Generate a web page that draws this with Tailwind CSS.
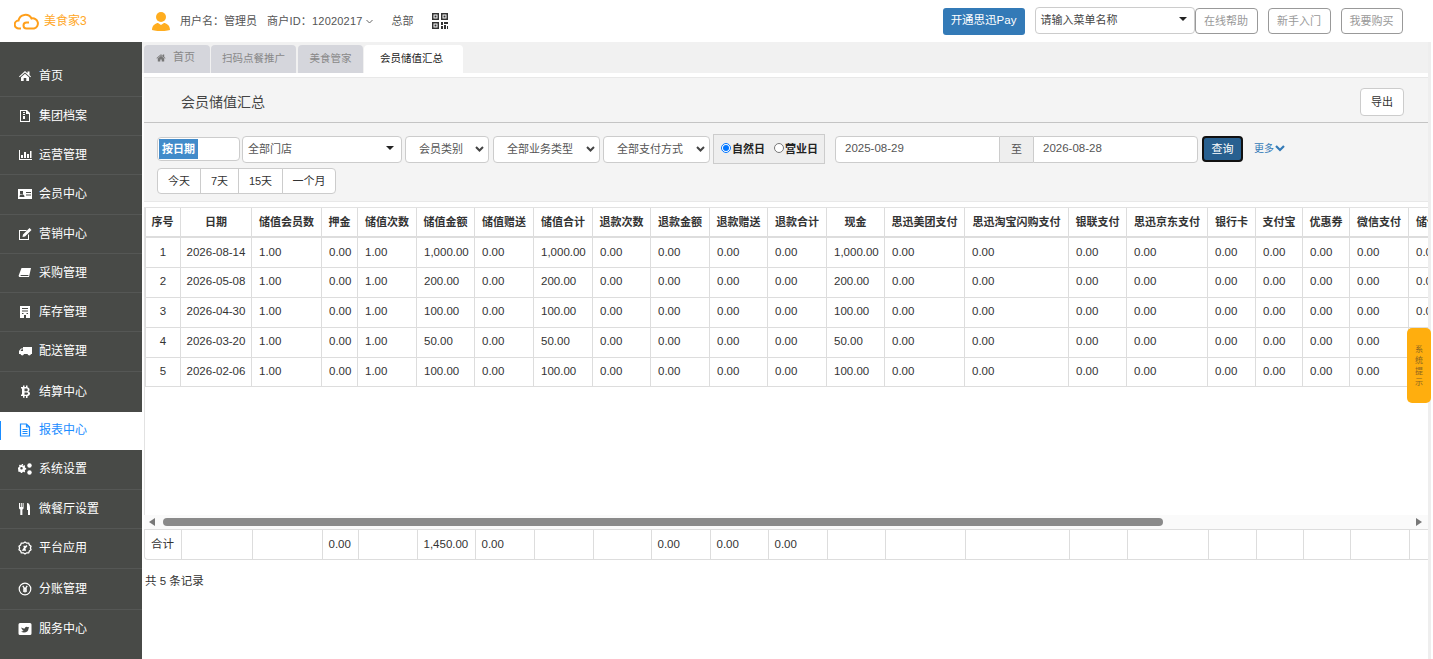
<!DOCTYPE html>
<html lang="zh-CN">

<head>
  <meta charset="UTF-8">
  <meta name="viewport" content="width=device-width, initial-scale=1.0">
  <title>会员储值汇总</title>
  <script src="https://cdn.jsdelivr.net/npm/@tailwindcss/browser@4"></script>
</head>

<body class="bg-white text-[#333] text-xs font-['Liberation_Sans','Noto_Sans_CJK_SC',sans-serif]">
  <div class="relative w-[1433px] h-[659px] overflow-hidden flex flex-col">

    <!-- Header -->
    <header class="h-[42px] shrink-0 flex items-center bg-white">
      <div class="w-[142px] pl-[14px] flex items-center gap-[4px] text-[#ffa726] text-xs">
        <svg class="w-[26px] h-[18px]" viewBox="0 0 26 18" fill="none" stroke="#ff9f1a" stroke-width="2">
          <path d="M7 16.500H5a4 4 0 0 1-.5-8A7 7 0 0 1 17.500 6.500 5 5 0 0 1 20 16.500H12.500a3 3 0 0 1 0-6H15" />
        </svg>
        <span>美食家3</span>
      </div>
      <svg class="ml-[10px] w-[18px] h-[20px]" viewBox="0 0 18 20" fill="#ffad1f">
        <circle cx="9" cy="6" r="5" />
        <path d="M0 19c0-5 4-7 6-7l3 2 3-2c2 0 6 2 6 7-4 1.500-14 1.500-18 0z" />
      </svg>
      <span class="ml-[10px] text-[11px] text-[#555]">用户名：管理员</span>
      <span class="ml-[10px] text-[11px] text-[#555] tracking-[0.2px]">商户ID：12020217</span>
      <svg class="ml-[3px] w-[7px] h-[5px]" viewBox="0 0 7 5" fill="none" stroke="#666">
        <path d="M.5 1l3 3 3-3" />
      </svg>
      <span class="ml-[19px] text-[11px] text-[#555]">总部</span>
      <svg class="ml-[18px] w-[16px] h-[16px]" viewBox="0 0 16 16" fill="#333">
        <path fill-rule="evenodd" d="M0 0h7v7H0zM1.500 1.500v4h4v-4zM9 0h7v7H9zm1.500 1.500v4h4v-4zM0 9h7v7H0zm1.500 1.500v4h4v-4z" />
        <path d="M2.500 2.500h2v2h-2zM11.500 2.500h2v2h-2zM2.500 11.500h2v2h-2zM9 9h2v3H9zM12 9h4v2h-4zM12 12h2v4h-2zM9 13h2v3H9zM15 13h1v3h-1z" />
      </svg>
      <button class="ml-[495px] w-[82px] h-[27px] rounded-[3px] bg-[#337ab7] text-white text-[11.5px]">开通思迅Pay</button>
      <div class="ml-[10px] w-[160px] h-[27px] -mt-[1px] flex items-center justify-between px-[5px] bg-white border border-[#ccc] rounded-[4px] text-[11px] text-[#444]">
        <span>请输入菜单名称</span>
        <span class="mr-[2px] -mt-[4px] border-x-[4px] border-t-[4px] border-x-transparent border-t-[#222]"></span>
      </div>
      <button class="w-[63px] h-[26px] border border-[#999] rounded-[4px] text-[11px] text-[#999]">在线帮助</button>
      <button class="ml-[10px] w-[63px] h-[26px] border border-[#999] rounded-[4px] text-[11px] text-[#999]">新手入门</button>
      <button class="ml-[10px] w-[62px] h-[26px] border border-[#999] rounded-[4px] text-[11px] text-[#999]">我要购买</button>
    </header>

    <div class="flex flex-1 min-h-0">
      <!-- Sidebar -->
      <aside id="sideMenu" class="w-[142px] shrink-0 pt-[15px] bg-[#484a47] text-white"></aside>

      <!-- Main -->
      <main class="relative flex-1 min-w-0 pl-[2px] border-r-[3px] border-r-[#eeeeee] mr-[2px]">
        <div class="-ml-[2px] pl-[2px] h-[31px] flex items-end gap-[1px] bg-[#f1f1f1] text-[10.5px]">
          <div class="w-[66px] h-[28px] flex items-center pl-[12px] pb-[3px] gap-[7px] rounded-t-[4px] bg-[#d5d6dc] text-[#888] text-[11px]">
            <svg class="w-[10px] h-[10px]" viewBox="0 0 1792 1792" fill="#777">
              <path d="M1472 992v480q0 26-19 45t-45 19h-384v-384h-256v384h-384q-26 0-45-19t-19-45v-480q0-1 .5-3t.5-3l575-474 575 474q1 2 1 6zm223-69l-62 74q-8 9-21 11h-3q-13 0-21-7l-692-577-692 577q-12 8-24 7-13-2-21-11l-62-74q-8-10-7-23.5t11-21.5l719-599q32-26 76-26t76 26l244 204v-195q0-14 9-23t23-9h192q14 0 23 9t9 23v408l219 182q10 8 11 21.5t-7 23.5z" />
            </svg>
            <span>首页</span>
          </div>
          <div class="w-[85px] h-[28px] flex items-center justify-center pb-[3px] rounded-t-[4px] bg-[#d5d6dc] text-[#888]">扫码点餐推广</div>
          <div class="ml-[1px] w-[65px] h-[28px] flex items-center justify-center pb-[3px] rounded-t-[4px] bg-[#d5d6dc] text-[#888]">美食管家</div>
          <div class="w-[99px] h-[28px] flex items-center justify-center pb-[3px] pr-[4px] rounded-t-[4px] bg-white text-[#222]">会员储值汇总</div>
        </div>

        <!-- Filter panel -->
        <section class="mt-[4px] h-[125px] bg-[#f4f4f4] border-y border-[#e8e8e8]">
          <div class="h-[45px] pt-[4px] flex items-center justify-between pl-[37px] pr-[24px] border-b border-[#c4c4c4]">
            <h2 class="text-sm text-[#444]">会员储值汇总</h2>
            <button class="w-[44px] h-[28px] bg-white border border-[#ccc] rounded-[4px] text-[11px] text-[#333]">导出</button>
          </div>
          <div class="pl-[13px] pt-[11px]">
            <div class="flex items-center h-[30px] text-[11px] text-[#555]">
              <div class="w-[83px] h-[24px] p-[1px] bg-white border border-[#ccc] rounded-[4px]">
                <div class="w-[39px] h-full flex items-center justify-center bg-[#428bca] text-white text-[11px] font-bold">按日期</div>
              </div>
              <div class="ml-[2px] w-[160px] h-[27px] flex items-center justify-between pl-[5px] pr-[5px] bg-white border border-[#ccc] rounded-[4px]">
                <span>全部门店</span>
                <span class="mr-[2px] -mt-[3px] border-x-[4px] border-t-[4px] border-x-transparent border-t-[#222]"></span>
              </div>
              <div class="ml-[3px] w-[84px] h-[27px] flex items-center justify-between pl-[13px] pr-[4px] bg-white border border-[#ccc] rounded-[4px]">
                <span>会员类别</span>
                <svg class="w-[9px] h-[6px]" viewBox="0 0 9 6" fill="none" stroke="#444" stroke-width="2"><path d="M1 1l3.500 3.500L8 1" /></svg>
              </div>
              <div class="ml-[4px] w-[107px] h-[27px] flex items-center justify-between pl-[13px] pr-[4px] bg-white border border-[#ccc] rounded-[4px]">
                <span>全部业务类型</span>
                <svg class="w-[9px] h-[6px]" viewBox="0 0 9 6" fill="none" stroke="#444" stroke-width="2"><path d="M1 1l3.500 3.500L8 1" /></svg>
              </div>
              <div class="ml-[3px] w-[107px] h-[27px] flex items-center justify-between pl-[13px] pr-[4px] bg-white border border-[#ccc] rounded-[4px]">
                <span>全部支付方式</span>
                <svg class="w-[9px] h-[6px]" viewBox="0 0 9 6" fill="none" stroke="#444" stroke-width="2"><path d="M1 1l3.500 3.500L8 1" /></svg>
              </div>
              <div class="ml-[3px] w-[112px] h-[30px] flex items-center pl-[7px] bg-[#eeeeee] border border-[#ccc] text-[#222] font-bold text-[11px]">
                <input type="radio" name="dayType" checked class="w-[10px] h-[10px] -mt-[2px] m-0">
                <span class="ml-[1px]">自然日</span>
                <input type="radio" name="dayType" class="ml-[9px] w-[10px] h-[10px] -mt-[2px] m-0">
                <span class="ml-[1px]">营业日</span>
              </div>
              <div class="ml-[10px] w-[165px] h-[27px] flex items-center pl-[9px] bg-white border border-[#ccc] rounded-l-[4px] text-[11.500px] text-[#555]">2025-08-29</div>
              <div class="w-[33px] h-[27px] flex items-center justify-center bg-[#eeeeee] border-y border-[#ccc]">至</div>
              <div class="w-[165px] h-[27px] flex items-center pl-[9px] bg-white border border-[#ccc] rounded-r-[4px] text-[11.500px] text-[#555]">2026-08-28</div>
              <button class="ml-[4px] w-[41px] h-[26px] bg-[#286090] border-2 border-[#111] rounded-[4px] text-white text-[11px]">查询</button>
              <span class="ml-[11px] text-[10px] text-[#337ab7]">更多</span>
              <svg class="ml-[1px] -mt-[1px] w-[10px] h-[7px]" viewBox="0 0 10 7" fill="none" stroke="#337ab7" stroke-width="2.200"><path d="M1 1l4 4 4-4" /></svg>
            </div>
            <div class="mt-[4px] flex h-[26px] text-[11px] text-[#333]">
              <button class="w-[44px] bg-white border border-[#ccc] rounded-l-[4px]">今天</button>
              <button class="-ml-[1px] w-[39px] bg-white border border-[#ccc]">7天</button>
              <button class="-ml-[1px] w-[45px] bg-white border border-[#ccc]">15天</button>
              <button class="-ml-[1px] w-[54px] bg-white border border-[#ccc] rounded-r-[4px]">一个月</button>
            </div>
          </div>
        </section>

        <!-- Data table -->
        <div class="mt-[5px] h-[308px] overflow-hidden border-l border-t border-[#e2e2e2] text-[11.500px]">
          <table id="dataTable" class="table-fixed border-collapse w-[1322px]"></table>
        </div>

        <!-- Scrollbar -->
        <div class="h-[14px] flex items-center bg-[#fafafa]">
          <span class="ml-[5px] border-y-[4px] border-r-[6px] border-y-transparent border-r-[#777]"></span>
          <div class="ml-[8px] w-[1000px] h-[8px] rounded-full bg-[#8a8a8a]"></div>
          <span class="ml-[253px] border-y-[4px] border-l-[6px] border-y-transparent border-l-[#777]"></span>
        </div>

        <!-- Totals -->
        <div class="h-[31px] overflow-hidden border-l border-t border-b border-[#dddddd] rounded-bl-[4px] text-[11.500px]">
          <table id="totalTable" class="table-fixed border-collapse w-[1323px]"></table>
        </div>

        <p class="mt-[14px] ml-[1px] text-[11.500px] text-[#333]">共 5 条记录</p>

        <!-- System notice tab -->
        <div class="absolute right-[-3px] top-[286px] w-[24px] h-[75px] flex flex-col items-center justify-center rounded-[5px] bg-[#ffae0e] text-[8px] leading-[11px] text-[#8a6420]">
          <span>系</span><span>统</span><span>提</span><span>示</span>
        </div>
      </main>
    </div>
  </div>

  <script>
    // 侧边菜单
    const menus = [
      ['首页', 'h-[40px]', '<path d="M1 7.500L7 2l2.500 2.300V2.500h2v3.600L13 7.500l-.7.700L7 3.400 1.700 8.200zM3 8.300L7 4.800l4 3.500V12H8.300V9H5.700v3H3z"/>'],
      ['集团档案', 'h-[39px]', '<path fill-rule="evenodd" d="M2 1h7l3 3v9H2zM3 2v10h8V5H8V2zM5 3h2v1H5zM5 5h2v1H5zM5 7h2v3H5z"/>'],
      ['运营管理', 'h-[39px]', '<path d="M1 2h1v9h12v1H1zM3 7h2v3H3zM6 4h2v6H6zM9 6h2v4H9zM12 3h1.500v7H12z"/>'],
      ['会员中心', 'h-[40px]', '<path fill-rule="evenodd" d="M0 2h14v10H0zM2 4v2.500a1.500 1.500 0 0 0 3 0V4zM1.500 10h5c0-2-1-2.500-2.500-2.500S1.500 8 1.500 10zM8 5v1h5V5zM8 7.500v1h5v-1z"/>'],
      ['营销中心', 'h-[39px]', '<path d="M1 3h8L8 4H2v8h8V8l1-1v6H1zM11.500 1L13.500 3 7 9.500 4.500 10l.5-2.500z"/>'],
      ['采购管理', 'h-[39px]', '<path d="M3.500 2H13l-2 9H2c-1 0-1.500-.8-1.300-1.600zM2.500 10h7.800l.2-1H2.700z"/>'],
      ['库存管理', 'h-[39px]', '<path fill-rule="evenodd" d="M2 1h10v12H2zM4 3v1h6V3zM4 5.500v1h6v-1zM4 8v1h1.500V8zM8.500 8v1H10V8zM6 10v3h2v-3z"/>'],
      ['配送管理', 'h-[40px]', '<path fill-rule="evenodd" d="M5 3h9v7h-1a1.800 1.800 0 0 1-3.500 0H6a1.800 1.800 0 0 1-3.500 0H1V7l2-2.500h2zM2.500 7H5V5.200H3.700z"/>'],
      ['结算中心', 'h-[40px]', '<path fill-rule="evenodd" d="M3 2h2V.5h1.500V2H8V.5h1.500v1.700c1.500.4 2 1.300 2 2.300 0 .9-.5 1.600-1.200 1.900 1 .3 1.700 1.100 1.700 2.200 0 1.500-1 2.400-2.500 2.600v1.800H8V11H6.500v1.800H5V11H3V9.500h1v-6H3zM6.500 3.600v2.600h1.700c1 0 1.500-.5 1.500-1.300s-.5-1.300-1.500-1.300zM6.500 7.400v2.400h2c1 0 1.500-.5 1.500-1.200 0-.8-.5-1.200-1.500-1.200z"/>'],
      ['报表中心', 'h-[38px]', '', true],
      ['系统设置', 'h-[40px]', '<path fill-rule="evenodd" d="M4.500 3.500l1 .3.700-.7 1 1-.4.900.4.800 1 .2v1.500l-1 .2-.4.800.4.900-1 1-.7-.7-1 .3-.3 1H2.800l-.3-1-.8-.3-.7.400-1-1 .4-.9L0 7V5.500l1-.2.400-.8-.4-.9 1-1 .7.700.8-.3.300-1h1.500zM3.500 5a1.200 1.200 0 1 0 0 2.500 1.200 1.200 0 0 0 0-2.500z"/><circle cx="11.500" cy="3.500" r="2.200"/><circle cx="11.500" cy="10.500" r="2.200"/>'],
      ['微餐厅设置', 'h-[39px]', '<path d="M1 1h1v4h.8V1h1v4h.8V1h1v5c0 .8-.6 1.200-1.200 1.400V13H2.300V7.400C1.600 7.200 1 6.800 1 6zM9 1c2 0 3 2 3 4.500V13h-2V8H9z"/>'],
      ['平台应用', 'h-[40px]', '<path fill="none" stroke="#fff" stroke-width="1.300" d="M7 1l1.700 1.200 2-.1.700 1.900 1.600 1.300L12.400 7l.6 1.700-1.600 1.300-.7 1.900-2-.1L7 13l-1.700-1.200-2 .1-.7-1.900L1 8.700 1.600 7 1 5.300 2.600 4l.7-1.900 2 .1zM5 9.500l4-5M5.500 5.500h2L5 9h3"/>'],
      ['分账管理', 'h-[41px]', '<circle cx="7" cy="7" r="5.800" fill="none" stroke="#fff" stroke-width="1.200"/><path fill="none" stroke="#fff" stroke-width="1.300" d="M4.800 3.800L7 7l2.200-3.200M7 7v3.500M5 7.200h4M5 9h4"/>'],
      ['服务中心', 'h-[39px]', '<path fill-rule="evenodd" d="M2 1h10a1.500 1.500 0 0 1 1.500 1.500v9A1.500 1.500 0 0 1 12 13H2a1.500 1.500 0 0 1-1.500-1.500v-9A1.500 1.500 0 0 1 2 1zm1 4c1.300 1 2.300 1.500 3.800 1.600C6.700 5 8.800 4 10 5.200l1.200-.4-.7 1 .8-.2-.8.800C10.500 9 8.500 10.500 6 10.500c-1 0-2-.3-3-1 1 .1 2-.2 2.700-.8C4.800 8.600 4.200 8.200 4 7.500h.8C4 7.200 3.300 6.500 3.300 5.800l.8.200C3.300 5.500 3 5 3 5z"/>']
    ];

    const sideMenu = document.getElementById('sideMenu');
    sideMenu.innerHTML = menus.map(([name, height, icon, active], i) => {
      if (active) {
        return `<div class="${height} relative flex items-center pl-[18px] pb-[2px] bg-white text-[#1a8cff]">
            <span class="absolute left-0 top-[9px] h-[19px] w-[1px] bg-[#1a8cff]"></span>
            <svg class="w-[14px] h-[14px] mr-[7px]" viewBox="0 0 14 14" fill="none" stroke="#1a8cff" stroke-width="1.200"><path d="M2.500 1h6l3 3v9h-9zM8.500 1v3h3M4.500 6.500h5M4.500 8.500h5M4.500 10.500h5"/></svg>
            <span>${name}</span>
          </div>`;
      }
      const divider = menus[i + 1] && menus[i + 1][3] || i === menus.length - 1 ? '' : 'border-b border-[#555755]';
      return `<div class="${height} ${divider} flex items-center pl-[18px] pb-[1px]">
          <svg class="w-[14px] h-[14px] mr-[7px]" viewBox="0 0 14 14" fill="#fff">${icon}</svg>
          <span>${name}</span>
        </div>`;
    }).join('');

    // 表格数据
    const headers = ['序号', '日期', '储值会员数', '押金', '储值次数', '储值金额', '储值赠送', '储值合计', '退款次数', '退款金额', '退款赠送', '退款合计', '现金', '思迅美团支付', '思迅淘宝闪购支付', '银联支付', '思迅京东支付', '银行卡', '支付宝', '优惠券', '微信支付', '储值赠送'];
    const widths = [36, 71, 70, 36, 59, 58, 59, 59, 58, 59, 58, 59, 58, 80, 104, 58, 81, 48, 47, 47, 59, 59];
    const rows = [
      ['2026-08-14', '1,000.00'],
      ['2026-05-08', '200.00'],
      ['2026-04-30', '100.00'],
      ['2026-03-20', '50.00'],
      ['2026-02-06', '100.00']
    ];
    const colgroup = widths.map((w, i) => `<col style="width:${i === 0 ? w - 1 : w}px">`).join('');
    const headCols = widths.map(w => `<col style="width:${w}px">`).join('');

    const rowCells = ([date, amount], index) => {
      const cells = [index + 1, date, '1.00', '0.00', '1.00', amount, '0.00', amount, '0.00', '0.00', '0.00', '0.00', amount, '0.00', '0.00', '0.00', '0.00', '0.00', '0.00', '0.00', '0.00', '0.00'];
      const height = index === 4 ? 'h-[29px]' : 'h-[30px]';
      return cells.map((value, i) =>
        `<td class="${height} p-0 overflow-hidden whitespace-nowrap border border-[#dddddd] ${i < 2 ? 'text-center' : 'text-left pl-[7px]'}">${value}</td>`
      ).join('');
    };

    document.getElementById('dataTable').innerHTML = `
      <colgroup>${colgroup}</colgroup>
      <thead><tr>${headers.map((h, i) => `<th class="h-[29px] p-0 overflow-hidden whitespace-nowrap font-bold text-[11px] text-center border-x border-[#dddddd] border-b-[2px] border-b-[#dddddd] ${i === 0 ? 'pr-[1px]' : ''}">${h}</th>`).join('')}</tr></thead>
      <tbody>${rows.map((r, i) => `<tr>${rowCells(r, i)}</tr>`).join('')}</tbody>`;

    const totals = { 0: '合计', 3: '0.00', 5: '1,450.00', 6: '0.00', 9: '0.00', 10: '0.00', 11: '0.00' };
    document.getElementById('totalTable').innerHTML = `
      <colgroup>${headCols}</colgroup>
      <tr>${widths.map((w, i) => `<td class="h-[30px] p-0 pl-[6px] overflow-hidden whitespace-nowrap border-r border-[#dddddd]">${totals[i] || ''}</td>`).join('')}</tr>`;
  </script>

</body>

</html>
